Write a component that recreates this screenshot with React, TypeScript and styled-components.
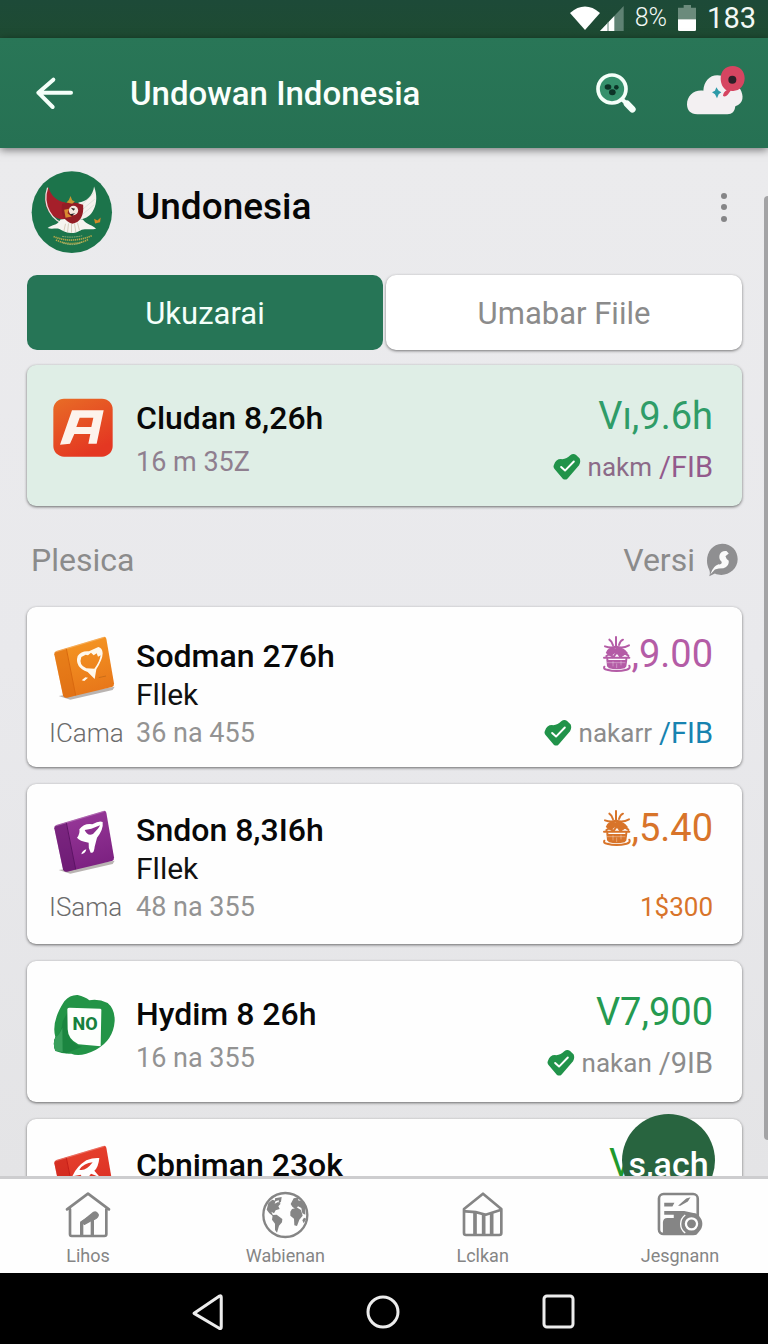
import React from "react";
import styled, { createGlobalStyle } from "styled-components";

const GlobalStyle = createGlobalStyle`
  * {
    box-sizing: border-box;
    margin: 0;
    padding: 0;
  }

  body {
    font-family: Roboto, "Liberation Sans", sans-serif;
    background-color: #ebebed;
  }

  button {
    font-family: inherit;
    border: none;
    background: none;
    cursor: pointer;
  }

  svg {
    display: block;
    flex-shrink: 0;
  }
`;

const Screen = styled.div`
  display: flex;
  flex-direction: column;
  height: 100vh;
  overflow: hidden;
`;

const StatusBar = styled.div`
  display: flex;
  align-items: center;
  justify-content: flex-end;
  height: 38px;
  flex-shrink: 0;
  padding: 0 12px 2px;
  gap: 11px;
  background: linear-gradient(#1d4a38, #1e4b32);
  color: #f2f8f4;
`;

const SignalIcons = styled.div`
  display: flex;
  align-items: center;
`;

const StatusText = styled.span<{ $size: number; $light?: boolean }>`
  font-size: ${(props) => props.$size}px;
  font-weight: ${(props) => (props.$light ? "300" : "400")};
  line-height: 34px;
`;

const AppBar = styled.header`
  display: flex;
  align-items: center;
  height: 110px;
  flex-shrink: 0;
  padding: 0 22px 0 32px;
  background: linear-gradient(#297657, #267153);
  box-shadow: 0 2px 8px rgba(0, 0, 0, 0.5);
  z-index: 2;
`;

const AppTitle = styled.h1`
  flex: 1;
  margin-left: 52px;
  padding-top: 2px;
  font-size: 33px;
  font-weight: 500;
  line-height: 40px;
  color: #fafffc;
`;

const IconButton = styled.button`
  display: flex;
  align-items: center;
  justify-content: center;
  margin-left: 48px;

  &:first-child {
    margin-left: 0;
  }
`;

const Main = styled.main`
  position: relative;
  flex: 1;
  min-height: 0;
  overflow: hidden;
  padding: 23px 26px 0 27px;
  background: linear-gradient(#ebebed, #e9e9ec 50%, #e4e4e6);
`;

const ScrollThumb = styled.div`
  position: absolute;
  top: 48px;
  right: 0;
  bottom: 36px;
  width: 4px;
  border-radius: 4px 0 0 4px;
  background-color: #a3a3a5;
`;

const Profile = styled.section`
  display: flex;
  align-items: center;
  height: 82px;
  padding: 0 5px 10px 4px;
`;

const AvatarSlot = styled.div`
  height: 72px;
  margin-right: 23px;
`;

const ProfileName = styled.h2`
  flex: 1;
  font-size: 37px;
  font-weight: 500;
  line-height: 44px;
  color: #060606;
`;

const Tabs = styled.div`
  display: grid;
  grid-template-columns: 1fr 1fr;
  gap: 3px;
  margin-top: 22px;
`;

const Tab = styled.button<{ $active?: boolean }>`
  height: 75px;
  padding-top: 2px;
  border-radius: 10px;
  font-size: 31px;
  font-weight: 400;
  color: ${(props) => (props.$active ? "#f4fffa" : "#8b8b8b")};
  background-color: ${(props) => (props.$active ? "#267556" : "#fff")};
  box-shadow: ${(props) =>
    props.$active ? "none" : "0 1px 3px rgba(0, 0, 0, 0.5)"};
`;

const Card = styled.article<{ $tall?: boolean; $tinted?: boolean }>`
  display: grid;
  grid-template-columns: 87px 1fr auto;
  grid-template-rows: ${(props) => (props.$tall ? "40px 37px 39px" : "40px 48px")};
  align-items: center;
  height: ${(props) => (props.$tall ? 160 : 141)}px;
  padding: ${(props) => (props.$tall ? 26 : 33)}px 29px 0 22px;
  border-radius: 9px;
  background-color: ${(props) => (props.$tinted ? "#dfeee6" : "#fefefe")};
  box-shadow: 0 1px 3px rgba(0, 0, 0, 0.55);
`;

const Featured = styled.section`
  margin-top: 15px;
`;

const CardList = styled.section`
  display: flex;
  flex-direction: column;
  gap: 17px;

  & > ${Card}:first-child {
    padding-top: 29px;
  }
`;

const CardIcon = styled.div`
  grid-row: 1;
  align-self: start;
  height: 40px;
  padding-left: 4px;
`;

const CardTitle = styled.h3`
  grid-column: 2;
  grid-row: 1;
  font-size: 32px;
  font-weight: 500;
  line-height: 40px;
  color: #080808;
  white-space: nowrap;
`;

const CardSub = styled.p`
  grid-column: 2;
  grid-row: 2;
  font-size: 30px;
  line-height: 36px;
  color: #111;
`;

const Tag = styled.span`
  grid-column: 1;
  grid-row: 3;
  font-size: 26px;
  font-weight: 300;
  line-height: 36px;
  color: #6c6c6c;
`;

const Meta = styled.p<{ $row: number; $color?: string }>`
  grid-column: 2;
  grid-row: ${(props) => props.$row};
  font-size: 27px;
  line-height: 36px;
  color: ${(props) => props.$color ?? "#939393"};
`;

const Price = styled.p<{ $color: string }>`
  grid-column: 3;
  grid-row: 1;
  display: flex;
  align-items: center;
  justify-content: flex-end;
  font-size: 38px;
  line-height: 40px;
  padding-bottom: 4px;
  color: ${(props) => props.$color};
`;

const HiddenPrice = styled(Price)`
  width: 104px;
  justify-content: flex-start;
`;

const Status = styled.p<{ $row: number; $color?: string }>`
  grid-column: 3;
  grid-row: ${(props) => props.$row};
  display: flex;
  align-items: center;
  justify-content: flex-end;
  gap: 7px;
  padding-top: ${(props) => (props.$row === 2 ? 10 : 0)}px;
  font-size: 26px;
  line-height: 36px;
  color: ${(props) => props.$color ?? "#8c8c8c"};
`;

const StatusUnit = styled.span<{ $color: string }>`
  font-size: 29px;
  color: ${(props) => props.$color};
`;

const SectionHead = styled.div`
  display: flex;
  align-items: center;
  justify-content: space-between;
  height: 101px;
  padding: 6px 4px 0 4px;
  font-size: 32px;
  color: #8b8b8b;
`;

const SectionTitle = styled.h2`
  font-size: inherit;
  font-weight: 400;
`;

const SortButton = styled.button`
  display: flex;
  align-items: center;
  gap: 11px;
  font-size: inherit;
  color: inherit;
`;

const Fab = styled.button`
  position: absolute;
  right: 53px;
  bottom: -31px;
  width: 93px;
  height: 93px;
  padding-top: 6px;
  border-radius: 50%;
  background-color: #28643f;
  color: #fff;
  font-size: 34px;
  font-weight: 500;
  line-height: 40px;
`;

const BottomNav = styled.nav`
  display: flex;
  justify-content: space-between;
  height: 97px;
  flex-shrink: 0;
  padding: 0 38px;
  border-top: 3px solid #cdcdcf;
  background-color: #fefefe;
  z-index: 1;
`;

const NavItem = styled.a`
  display: flex;
  flex-direction: column;
  align-items: center;
  width: 100px;
  padding-top: 12px;
  gap: 4px;
  font-size: 18px;
  line-height: 26px;
  color: #858585;
  text-decoration: none;
`;

const SystemBar = styled.div`
  display: flex;
  align-items: center;
  justify-content: center;
  gap: 140px;
  height: 71px;
  flex-shrink: 0;
  padding-top: 6px;
  background-color: #000;
`;

const SystemKey = styled.button`
  display: flex;
`;

function WifiIcon() {
  return (
    <svg width="30" height="24" viewBox="90 12 88 70">
      <path fill="#fff" d="M90 32Q134-6 178 32L134 82Z" />
    </svg>
  );
}

function SignalIcon() {
  return (
    <svg width="24" height="25" viewBox="175 12 72 75">
      <path fill="#5f8273" d="M175 87L246 12V87Z" />
      <path fill="#fff" d="M175 87L218 42V87Z" />
      <path stroke="#5f8273" strokeWidth="3" d="M199 60V87" />
    </svg>
  );
}

function BatteryIcon() {
  return (
    <svg width="18" height="26" viewBox="395 9 54 78">
      <path fill="#6b8b7c" d="M395 17H412V9H434V17H449V52H395Z" />
      <path fill="#fff" d="M395 52H449V83Q449 87 445 87H399Q395 87 395 83Z" />
    </svg>
  );
}

function BackIcon() {
  return (
    <svg width="46" height="40" viewBox="96 218 138 120">
      <path
        fill="none"
        stroke="#f4fff9"
        strokeWidth="12"
        strokeLinecap="round"
        strokeLinejoin="round"
        d="M160 238L115 277L158 320M115 277H213"
      />
    </svg>
  );
}

function SearchIcon() {
  return (
    <svg width="44" height="44" viewBox="163 216 132 132">
      <path stroke="#f4fff9" strokeWidth="12" d="M248 302L262 314" />
      <path stroke="#f4fff9" strokeWidth="20" strokeLinecap="round" d="M262 314L278 331" />
      <circle cx="217" cy="270" r="42" fill="#35906c" stroke="#f4fff9" strokeWidth="11" />
      <g fill="#0c3327">
        <ellipse cx="205" cy="264" rx="10" ry="8" />
        <ellipse cx="230" cy="265" rx="7" ry="7" />
        <ellipse cx="218" cy="280" rx="10" ry="9" />
      </g>
    </svg>
  );
}

function CloudIcon() {
  return (
    <svg width="60" height="56" viewBox="438 193 180 168">
      <path
        fill="#f3f0f2"
        d="M472 341C451 341 441 328 441 311C441 286 462 266 490 270C492 242 508 224 532 224C551 224 566 234 574 252L600 264C612 284 612 308 586 317C584 333 577 341 562 341Z"
      />
      <path
        fill="#d64561"
        d="M560 269Q550 274 549 286Q556 290 563 282L572 270C595 275 614 257 614 233C614 212 600 196 578 196C556 196 542 212 542 233C542 250 549 263 560 269Z"
      />
      <circle cx="577" cy="237" r="12" fill="#2d2028" />
      <path fill="#2d9aa8" d="M529 260L536 270L544 275L536 281L531 293L525 281L516 275L525 270Z" />
    </svg>
  );
}

function EmblemAvatar() {
  return (
    <svg width="82" height="82" viewBox="95 63 245 247">
      <ellipse cx="217" cy="187" rx="121" ry="123" fill="#1c744b" />
      <path fill="#a51f2a" d="M147 112C153 139 177 157 197 157L202 208C158 214 118 170 147 112Z" />
      <path fill="#f5f2ee" d="M284 110C281 138 260 157 237 158L240 208C276 211 304 162 284 110Z" />
      <path stroke="#a9c4b6" strokeWidth="1" fill="none" d="M283 130L244 168M286 148L245 182M284 165L246 196" />
      <path stroke="#f0dcdc" strokeWidth="4" fill="none" d="M144 113C126 165 158 217 200 222" />
      <path
        fill="#f6f4f0"
        d="M144 235C160 222 170 230 183 209L218 205L250 209C262 226 280 225 290 237C272 241 254 235 243 242C226 252 205 253 185 241C173 231 162 240 144 235Z"
      />
      <path fill="#941d25" d="M188 162Q217 151 251 165C254 200 241 219 218 222C197 216 181 197 188 162Z" />
      <path fill="#c99632" d="M201 158L208 150L213 138L218 151L226 155L218 162Z" />
      <circle cx="222" cy="182" r="14" fill="#f4e9df" />
      <path fill="#d88a31" d="M194 180L209 177L204 190L217 200L198 204Z" />
      <path fill="#2a2324" d="M214 174L227 177L222 183ZM210 193L227 190L217 198Z" />
      <path stroke="#c7b9a3" strokeWidth="2" d="M198 222L193 244M207 221L204 248M216 221V249M225 221L229 247M234 219L240 242" />
      <path fill="#d58a27" d="M284 207L294 212L304 203L302 217L287 221Z" />
      <path fill="none" stroke="#b4a849" strokeWidth="5" strokeDasharray="4 2" d="M162 260Q215 283 277 258M169 271Q219 293 267 269" />
      <path fill="none" stroke="#d5cd8d" strokeWidth="2" strokeDasharray="5 2" d="M188 260Q220 265 248 258M189 279Q218 291 247 278" />
    </svg>
  );
}

function MoreIcon() {
  return (
    <svg width="26" height="32" viewBox="0 0 26 32" fill="#858587">
      <circle cx="13" cy="5" r="3" />
      <circle cx="13" cy="16" r="3" />
      <circle cx="13" cy="28" r="3" />
    </svg>
  );
}

function LetterAppIcon() {
  return (
    <svg width="60" height="60" viewBox="68 58 180 180">
      <defs>
        <linearGradient id="letterApp" x1="0" y1="0" x2="0.5" y2="1">
          <stop offset="0" stopColor="#e86d26" />
          <stop offset="1" stopColor="#e43722" />
        </linearGradient>
      </defs>
      <rect x="69" y="60" width="178" height="174" rx="32" fill="url(#letterApp)" />
      <path
        fill="#fdf3ec"
        fillRule="evenodd"
        d="M125 95H220L199 195H174L180 166H132L119 195L89 198ZM148 117L138 145H183L189 117Z"
      />
    </svg>
  );
}

type BoxColors = { id: string; light: string; dark: string; edge: string };

function BoxIcon({ colors, children }: { colors: BoxColors; children: React.ReactNode }) {
  return (
    <svg width="62" height="64" viewBox="66 74 186 192">
      <defs>
        <linearGradient id={colors.id} x1="0" y1="0" x2="0.3" y2="1">
          <stop offset="0" stopColor={colors.light} />
          <stop offset="1" stopColor={colors.dark} />
        </linearGradient>
      </defs>
      <path fill="#b9b4b2" d="M83 254L251 226L245 236L118 265Z" />
      <path
        fill={`url(#${colors.id})`}
        d="M70 129Q69 122 76 119L217 77Q224 75 226 82L249 216Q250 224 243 227L108 259Q98 261 96 252Z"
      />
      <path fill={colors.edge} fillOpacity="0.45" d="M72 122L105 112L134 252L108 259Q98 261 96 252L70 129Z" />
      <path stroke={colors.edge} strokeWidth="3" fill="none" d="M106 112L134 252" />
      <path stroke="#fff" strokeOpacity="0.4" strokeWidth="2" fill="none" d="M73 122L220 78" />
      {children}
    </svg>
  );
}

function HeartBoxIcon() {
  return (
    <BoxIcon colors={{ id: "boxOrange", light: "#f79a24", dark: "#e8781a", edge: "#d9690f" }}>
      <path
        fill="#fff8ec"
        fillRule="evenodd"
        d="M140 134Q150 118 174 120L202 107Q214 109 215 126Q215 144 196 174L191 203L170 182Q130 167 140 134ZM151 137Q142 161 166 171L190 172Q205 154 209 132L201 136L197 126L188 132L180 124L171 132L164 130Z"
      />
      <path fill="#fff8ec" d="M152 207L163 198L171 199L160 209Z" />
      <path stroke="#b96516" strokeWidth="2" d="M203 199L225 194" />
    </BoxIcon>
  );
}

function PurpleBoxIcon() {
  return (
    <BoxIcon colors={{ id: "boxPurple", light: "#9b3b9c", dark: "#7d2282", edge: "#5d1465" }}>
      <path
        fill="#fff"
        fillRule="evenodd"
        d="M145 132Q160 113 184 117Q205 105 215 110Q218 132 198 157L191 184Q189 206 179 202Q171 187 173 172Q145 167 138 157Q148 145 145 132ZM161 134Q170 154 186 146Q206 126 207 120L181 130Z"
      />
      <path fill="#fff" d="M151 207Q153 196 166 192Q164 204 151 207Z" />
    </BoxIcon>
  );
}

function RedBoxIcon() {
  return (
    <BoxIcon colors={{ id: "boxRed", light: "#e8442f", dark: "#d92c22", edge: "#c51f19" }}>
      <path
        fill="#fff"
        fillRule="evenodd"
        d="M124 168Q136 139 166 120Q188 111 205 113Q202 142 190 151L207 171L180 160L161 185L149 163ZM145 148Q164 154 185 126Q159 128 145 148Z"
      />
    </BoxIcon>
  );
}

// green blob with a small NO label on it
const BlobWrap = styled.div`
  position: relative;
  width: 62px;
`;

const BlobLabel = styled.span`
  position: absolute;
  top: 18px;
  left: 18px;
  width: 28px;
  text-align: center;
  font-size: 18px;
  font-weight: 800;
  line-height: 24px;
  color: #16813d;
`;

function BlobIcon() {
  return (
    <BlobWrap>
      <svg width="62" height="62" viewBox="68 68 186 186">
        <path
          fill="#239447"
          d="M102 90Q119 70 142 71Q164 76 177 87Q205 82 232 95Q254 113 253 149Q249 207 197 235Q150 259 123 247Q99 249 75 239Q66 218 75 197Q62 151 102 90Z"
        />
        <path fill="#1b8540" d="M112 122L112 180Q118 218 155 226L108 246Q91 243 76 237Q66 218 75 198Q93 189 97 150Z" />
        <path fill="#3a9f5c" d="M75 198Q88 190 96 169L97 242L75 238Q66 218 75 198Z" />
        <path fill="#fdfffd" d="M111 113Q112 109 118 109L209 112Q214 112 213 118L211 225L144 219Q113 204 112 174Z" />
      </svg>
      <BlobLabel>NO</BlobLabel>
    </BlobWrap>
  );
}

function HeartCheckIcon() {
  return (
    <svg width="28" height="28" viewBox="98 216 86 84">
      <path
        fill="#21934a"
        d="M101 251Q107 232 126 234Q141 233 151 222Q160 214 169 221L180 232Q184 243 178 253L143 293Q136 300 128 294L104 266Q97 259 101 251Z"
      />
      <path
        fill="none"
        stroke="#fff"
        strokeWidth="6"
        strokeLinecap="round"
        strokeLinejoin="round"
        d="M123 258L135 269L162 241"
      />
    </svg>
  );
}

function CakeIcon() {
  return (
    <svg
      width="28"
      height="38"
      viewBox="192 69 84 114"
      fill="none"
      stroke="currentColor"
      strokeWidth="6"
      strokeLinecap="round"
    >
      <path d="M231 106V75M222 100Q219 88 211 83M240 99Q244 86 252 83M198 103Q218 110 231 103Q250 111 270 100" />
      <path fill="currentColor" d="M204 122Q212 105 229 112Q248 104 263 123L248 130L230 119L214 130Z" />
      <path d="M202 132L214 125L222 136L234 121L244 134L257 124L268 131M195 137H271M205 142L207 162M262 142L259 162" />
      <path fill="currentColor" d="M207 147H259L256 166Q232 172 211 166Z" />
      <path d="M196 164Q193 172 204 173Q232 181 263 173Q275 170 271 161" />
      <path stroke="#fff" strokeOpacity="0.5" strokeWidth="2" d="M222 149V162M233 156V167M246 147V159M205 152H258" />
    </svg>
  );
}

function ChatIcon() {
  return (
    <svg width="32" height="34" viewBox="559 479 97 102">
      <path
        fill="#8f8f91"
        d="M569 579Q573 568 568 558C552 527 569 481 608 481C636 481 655 502 655 528C655 563 616 585 586 571Z"
      />
      <path
        fill="#fafafa"
        d="M600 515Q605 501 621 503L628 510L618 519Q620 528 628 532Q630 549 612 555Q596 555 586 559L572 574Q581 547 597 543Q607 545 607 536Q597 528 600 515Z"
      />
    </svg>
  );
}

function HomeIcon() {
  return (
    <svg
      width="46"
      height="48"
      viewBox="196 64 138 144"
      fill="none"
      stroke="#858585"
      strokeWidth="8"
      strokeLinejoin="round"
      strokeLinecap="round"
    >
      <path d="M202 119L265 72L328 119M211 119V194Q211 199 216 199H314Q320 199 320 194V119" />
      <path strokeWidth="10" d="M246 196V159L286 134M278 196V150" />
      <path fill="#858585" strokeWidth="4" d="M246 157L280 129Q292 123 296 136Q294 148 278 151L254 164Z" />
    </svg>
  );
}

function GlobeIcon() {
  return (
    <svg width="48" height="48" viewBox="790 65 144 144">
      <circle cx="863" cy="137" r="66" fill="none" stroke="#858585" strokeWidth="7" />
      <g fill="#858585">
        <path d="M812 101L824 91L834 94L831 103L841 98L849 103L842 111L846 119L834 123L829 132L821 127L828 142L815 132L807 121Z" />
        <path d="M832 87L852 83L850 97L842 104L844 93L832 96Z" />
        <path d="M825 137L837 136L854 149L853 159L844 169L838 190L832 182V163L823 151Z" />
        <path d="M879 104L888 87L904 84L901 93L911 95L923 111V136L914 132L911 116L901 111L894 120L884 112Z" />
        <path d="M883 119L899 115L910 122L915 139L905 151L898 170L890 168L889 148L878 139V127Z" />
        <path d="M919 145L926 148L918 162L914 153Z" />
      </g>
    </svg>
  );
}

function MarketIcon() {
  return (
    <svg
      width="44"
      height="48"
      viewBox="236 64 132 144"
      fill="none"
      stroke="#858585"
      strokeWidth="8"
      strokeLinejoin="round"
    >
      <path d="M245 118L302 72L357 118V190Q357 196 351 196H251Q245 196 245 190Z" />
      <path d="M245 125Q278 124 310 135Q332 128 357 120" />
      <path strokeWidth="11" d="M278 128V196M304 132V196M328 131V196" />
    </svg>
  );
}

function CameraCardIcon() {
  return (
    <svg width="46" height="48" viewBox="815 68 140 144">
      <rect x="821" y="76" width="118" height="122" rx="14" fill="none" stroke="#858585" strokeWidth="8" />
      <path
        fill="#858585"
        d="M833 199V162Q834 147 850 149H866V139H837V128H898L936 136V199ZM837 103H868L862 114H837ZM879 112L904 90L917 86L909 99L886 112Z"
      />
      <circle cx="920" cy="167" r="33" fill="#858585" />
      <path fill="none" stroke="#fff" strokeWidth="4" d="M901 140A34 34 0 0 0 901 195" />
      <circle cx="920" cy="167" r="17" fill="none" stroke="#fff" strokeWidth="7" />
    </svg>
  );
}

function SystemBackIcon() {
  return (
    <svg width="34" height="38" viewBox="576 370 100 112">
      <path
        fill="none"
        stroke="#ececec"
        strokeWidth="9"
        strokeLinejoin="round"
        d="M585 430L660 379Q665 377 665 383V470Q665 477 659 474Z"
      />
    </svg>
  );
}

export default function App() {
  return (
    <>
      <GlobalStyle />
      <Screen>
        <StatusBar>
          <SignalIcons>
            <WifiIcon />
            <SignalIcon />
          </SignalIcons>
          <StatusText $size={25} $light>
            8%
          </StatusText>
          <BatteryIcon />
          <StatusText $size={29}>183</StatusText>
        </StatusBar>
        <AppBar>
          <IconButton aria-label="Back">
            <BackIcon />
          </IconButton>
          <AppTitle>Undowan Indonesia</AppTitle>
          <IconButton aria-label="Search">
            <SearchIcon />
          </IconButton>
          <IconButton aria-label="Cloud">
            <CloudIcon />
          </IconButton>
        </AppBar>

        <Main>
          <Profile>
            <AvatarSlot>
              <EmblemAvatar />
            </AvatarSlot>
            <ProfileName>Undonesia</ProfileName>
            <IconButton aria-label="More">
              <MoreIcon />
            </IconButton>
          </Profile>

          <Tabs>
            <Tab $active>Ukuzarai</Tab>
            <Tab>Umabar Fiile</Tab>
          </Tabs>

          <Featured>
            <Card $tinted>
              <CardIcon>
                <LetterAppIcon />
              </CardIcon>
              <CardTitle>Cludan 8,26h</CardTitle>
              <Meta $row={2} $color="#8f7f8f">
                16 m 35Z
              </Meta>
              <Price $color="#2f9c68">Vı,9.6h</Price>
              <Status $row={2} $color="#8c6a88">
                <HeartCheckIcon />
                nakm <StatusUnit $color="#935a8c">/FIB</StatusUnit>
              </Status>
            </Card>
          </Featured>

          <SectionHead>
            <SectionTitle>Plesica</SectionTitle>
            <SortButton>
              Versi
              <ChatIcon />
            </SortButton>
          </SectionHead>

          <CardList>
            <Card $tall>
              <CardIcon>
                <HeartBoxIcon />
              </CardIcon>
              <CardTitle>Sodman 276h</CardTitle>
              <CardSub>Fllek</CardSub>
              <Tag>ICama</Tag>
              <Meta $row={3}>36 na 455</Meta>
              <Price $color="#b45ca6">
                <CakeIcon />
                ,9.00
              </Price>
              <Status $row={3}>
                <HeartCheckIcon />
                nakarr <StatusUnit $color="#1783b0">/FIB</StatusUnit>
              </Status>
            </Card>

            <Card $tall>
              <CardIcon>
                <PurpleBoxIcon />
              </CardIcon>
              <CardTitle>Sndon 8,3I6h</CardTitle>
              <CardSub>Fllek</CardSub>
              <Tag>ISama</Tag>
              <Meta $row={3}>48 na 355</Meta>
              <Price $color="#d8742a">
                <CakeIcon />
                ,5.40
              </Price>
              <Status $row={3} $color="#d8742a">
                1$300
              </Status>
            </Card>

            <Card>
              <CardIcon>
                <BlobIcon />
              </CardIcon>
              <CardTitle>Hydim 8 26h</CardTitle>
              <Meta $row={2}>16 na 355</Meta>
              <Price $color="#259a50">V7,900</Price>
              <Status $row={2}>
                <HeartCheckIcon />
                nakan <StatusUnit $color="#8c8c8c">/9IB</StatusUnit>
              </Status>
            </Card>

            <Card $tall>
              <CardIcon>
                <RedBoxIcon />
              </CardIcon>
              <CardTitle>Cbniman 23ok</CardTitle>
              <HiddenPrice $color="#1f9a2d">V</HiddenPrice>
            </Card>
          </CardList>

          <Fab>s,ach</Fab>
          <ScrollThumb />
        </Main>

        <BottomNav>
          <NavItem href="#lihos">
            <HomeIcon />
            Lihos
          </NavItem>
          <NavItem href="#wabienan">
            <GlobeIcon />
            Wabienan
          </NavItem>
          <NavItem href="#lclkan">
            <MarketIcon />
            Lclkan
          </NavItem>
          <NavItem href="#jesgnann">
            <CameraCardIcon />
            Jesgnann
          </NavItem>
        </BottomNav>

        <SystemBar>
          <SystemKey aria-label="System back">
            <SystemBackIcon />
          </SystemKey>
          <SystemKey aria-label="System home">
            <svg width="36" height="36" viewBox="0 0 36 36">
              <circle cx="18" cy="18" r="15" fill="none" stroke="#ececec" strokeWidth="3" />
            </svg>
          </SystemKey>
          <SystemKey aria-label="Recent apps">
            <svg width="36" height="36" viewBox="0 0 36 36">
              <rect x="3" y="2" width="29" height="31" rx="3" fill="none" stroke="#ececec" strokeWidth="3" />
            </svg>
          </SystemKey>
        </SystemBar>
      </Screen>
    </>
  );
}
